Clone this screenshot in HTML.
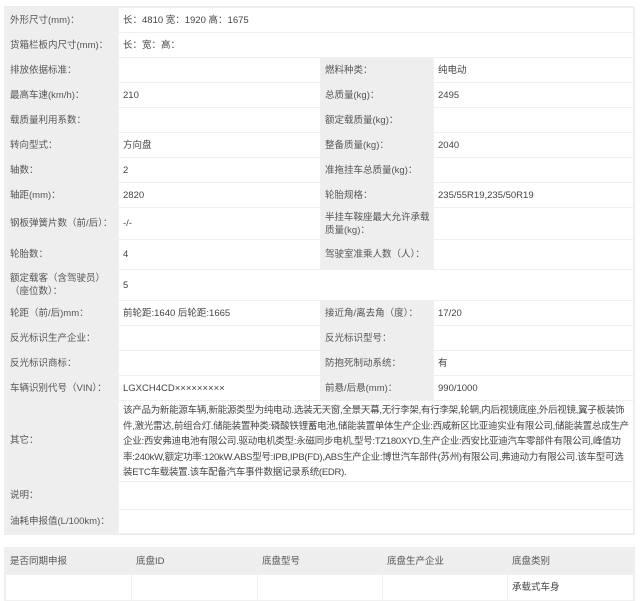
<!DOCTYPE html>
<html><head><meta charset="utf-8"><style>
body{margin:0;background:#fff;font-family:"Liberation Sans","Noto Sans CJK SC",sans-serif;font-size:9.5px;color:#444;width:640px;height:601px;overflow:hidden;position:relative}
table{position:absolute;left:5px;border-collapse:collapse;table-layout:fixed;background:#fff;outline:1px solid #eee}
td{border:1px solid #f0f0f0;padding:0 0 0 4px;vertical-align:middle;line-height:13px}
td.l{background:#eeeeee;color:#555}
</style></head><body>
<table style="top:7px;width:628px">
<colgroup><col style="width:113px"><col style="width:202px"><col style="width:113px"><col style="width:200px"></colgroup>
<tr style="height:25px"><td class="l">外形尺寸(mm)：</td><td colspan="3">长：4810 宽：1920 高：1675</td></tr>
<tr style="height:25px"><td class="l">货箱栏板内尺寸(mm)：</td><td colspan="3">长：宽：高：</td></tr>
<tr style="height:25px"><td class="l">排放依据标准：</td><td></td><td class="l">燃料种类：</td><td>纯电动</td></tr>
<tr style="height:25px"><td class="l">最高车速(km/h)：</td><td>210</td><td class="l">总质量(kg)：</td><td>2495</td></tr>
<tr style="height:25px"><td class="l">载质量利用系数：</td><td></td><td class="l">额定载质量(kg)：</td><td></td></tr>
<tr style="height:25px"><td class="l">转向型式：</td><td>方向盘</td><td class="l">整备质量(kg)：</td><td>2040</td></tr>
<tr style="height:25px"><td class="l">轴数：</td><td>2</td><td class="l">准拖挂车总质量(kg)：</td><td></td></tr>
<tr style="height:25px"><td class="l">轴距(mm)：</td><td>2820</td><td class="l">轮胎规格：</td><td>235/55R19,235/50R19</td></tr>
<tr style="height:32px"><td class="l">钢板弹簧片数（前/后）：</td><td>-/-</td><td class="l">半挂车鞍座最大允许承载质量(kg)：</td><td></td></tr>
<tr style="height:30px"><td class="l">轮胎数：</td><td>4</td><td class="l">驾驶室准乘人数（人）：</td><td></td></tr>
<tr style="height:31px"><td class="l">额定载客（含驾驶员）（座位数）：</td><td colspan="3">5</td></tr>
<tr style="height:25px"><td class="l">轮距（前/后)mm：</td><td>前轮距:1640 后轮距:1665</td><td class="l">接近角/离去角（度）：</td><td>17/20</td></tr>
<tr style="height:25px"><td class="l">反光标识生产企业：</td><td></td><td class="l">反光标识型号：</td><td></td></tr>
<tr style="height:25px"><td class="l">反光标识商标：</td><td></td><td class="l">防抱死制动系统：</td><td>有</td></tr>
<tr style="height:25px"><td class="l">车辆识别代号（VIN）：</td><td>LGXCH4CD×××××××××</td><td class="l">前悬/后悬(mm)：</td><td>990/1000</td></tr>
<tr style="height:79px"><td class="l">其它：</td><td colspan="3" style="line-height:15.5px;padding:2px 4px 0 4px;letter-spacing:-0.27px">该产品为新能源车辆,新能源类型为纯电动.选装无天窗,全景天幕,无行李架,有行李架,轮辋,内后视镜底座,外后视镜,翼子板装饰件,激光雷达,前组合灯.储能装置种类:磷酸铁锂蓄电池,储能装置单体生产企业:西咸新区比亚迪实业有限公司,储能装置总成生产企业:西安弗迪电池有限公司.驱动电机类型:永磁同步电机,型号:TZ180XYD,生产企业:西安比亚迪汽车零部件有限公司,峰值功率:240kW,额定功率:120kW.ABS型号:IPB,IPB(FD),ABS生产企业:博世汽车部件(苏州)有限公司,弗迪动力有限公司.该车型可选装ETC车载装置.该车配备汽车事件数据记录系统(EDR).</td></tr>
<tr style="height:28px"><td class="l">说明：</td><td colspan="3"></td></tr>
<tr style="height:24px"><td class="l">油耗申报值(L/100km)：</td><td colspan="3"></td></tr>
</table>
<table style="top:548px;width:628px">
<colgroup><col style="width:126px"><col style="width:126px"><col style="width:125px"><col style="width:125px"><col style="width:126px"></colgroup>
<tr style="height:26px"><td class="l">是否同期申报</td><td class="l">底盘ID</td><td class="l">底盘型号</td><td class="l">底盘生产企业</td><td class="l">底盘类别</td></tr>
<tr style="height:26px"><td></td><td></td><td></td><td></td><td>承载式车身</td></tr>
</table>
</body></html>
